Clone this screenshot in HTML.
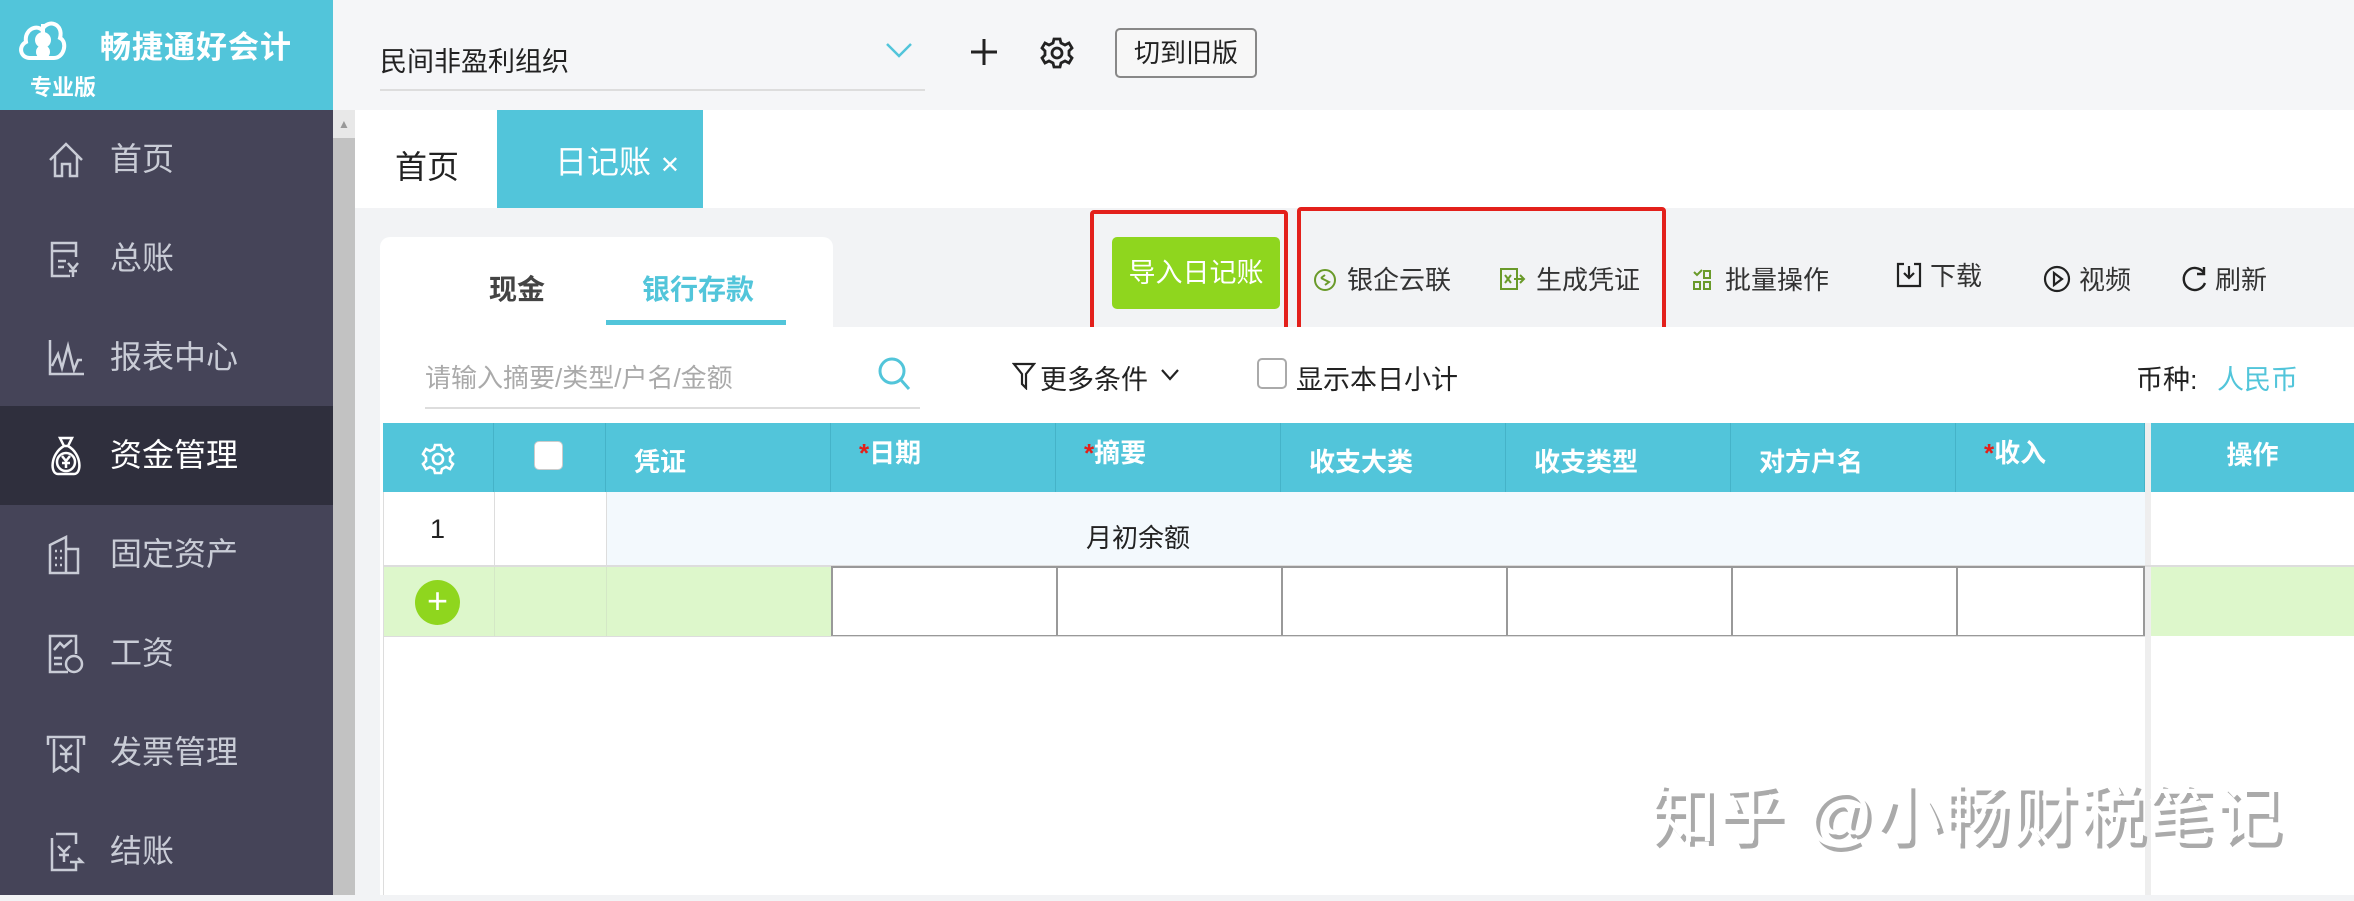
<!DOCTYPE html>
<html><head><meta charset="utf-8"><style>
*{margin:0;padding:0;box-sizing:border-box}
body{width:2354px;height:895px;position:relative;overflow:hidden;background:#f2f3f5;font-family:"Liberation Sans","Noto Sans CJK SC",sans-serif;color:#333}
.a{position:absolute}
.side{left:0;top:110px;width:333px;height:785px;background:#454458}
.item{position:absolute;left:0;width:333px;height:99px;color:#c9ccd6;font-size:32px;line-height:99px;padding-left:110px}
.item svg{position:absolute;left:46px;top:30px}
.tb{font-size:26px;color:#333;top:263px;line-height:34px}
.th{position:absolute;top:423px;height:69px;background:#52c5da;color:#fff;font-size:26px;font-weight:bold;line-height:69px;border-right:1px solid #45b3c8}
.red{border:4px solid #e3201b;border-radius:4px}
</style></head><body>
<div class="a" style="left:0;top:0;width:333px;height:110px;background:#52c5da"></div>
<svg class="a" style="left:16px;top:14px" width="52" height="52" viewBox="0 0 52 52" fill="none" stroke="#fff" stroke-width="4"><path d="M14 44 C4 44 2 32 10 28 C8 16 20 10 26 16 C32 4 48 10 44 24 C52 28 48 44 38 44 Z"/><circle cx="27" cy="26" r="6" fill="#fff"/><circle cx="27" cy="38" r="5" fill="#fff"/><path d="M27 10 V46"/></svg>
<div class="a" style="left:100px;top:22px;color:#fff;font-size:31px;font-weight:bold;letter-spacing:1px">畅捷通好会计</div>
<div class="a" style="left:30px;top:70px;color:#fff;font-size:22px;font-weight:bold">专业版</div>
<div class="a" style="left:333px;top:0;width:2021px;height:110px;background:#f5f6f8"></div>
<div class="a" style="left:380px;top:40px;font-size:27px;color:#222">民间非盈利组织</div>
<div class="a" style="left:380px;top:89px;width:545px;height:2px;background:#ddd"></div>
<svg class="a" style="left:885px;top:42px" width="28" height="18"><path d="M2 2 L14 14 L26 2" stroke="#52c5da" stroke-width="2.5" fill="none"/></svg>
<svg class="a" style="left:970px;top:38px" width="28" height="28"><path d="M14 1V27M1 14H27" stroke="#222" stroke-width="3"/></svg>
<svg class="a" style="left:1040px;top:36px" width="34" height="34" viewBox="0 0 34 34" fill="none" stroke="#222" stroke-width="2.8"><path d="M14 3h6l1 4 4 2 4-2 3 5-3 3v4l3 3-3 5-4-2-4 2-1 4h-6l-1-4-4-2-4 2-3-5 3-3v-4l-3-3 3-5 4 2 4-2z"/><circle cx="17" cy="17" r="5"/></svg>
<div class="a" style="left:1115px;top:28px;width:142px;height:50px;border:2px solid #888;border-radius:5px;background:#f7f7f7;font-size:26px;line-height:46px;text-align:center;color:#222">切到旧版</div>
<div class="a side"></div>
<div class="a" style="left:333px;top:110px;width:22px;height:785px;background:#c2c2c2"></div>
<div class="a" style="left:333px;top:110px;width:22px;height:28px;background:#e8e8e8;color:#999;font-size:12px;text-align:center;line-height:28px">▲</div>
<div class="item" style="top:110px"><svg width="40" height="40" viewBox="0 0 40 40" fill="none" stroke="#c9ccd6" stroke-width="2.5"><path d="M4 20 L20 4 L36 20 M9 15 V36 H16 V24 H24 V36 H31 V15"/></svg>首页</div>
<div class="item" style="top:209px"><svg width="40" height="40" viewBox="0 0 40 40" fill="none" stroke="#c9ccd6" stroke-width="2.5"><path d="M24 37 H6 V4 H30 V18 M6 12 H30 M12 22 H20 M12 28 H18 M22 24 L27 30 L32 24 M27 30 V38 M23 32 H31"/></svg>总账</div>
<div class="item" style="top:308px"><svg width="40" height="40" viewBox="0 0 40 40" fill="none" stroke="#c9ccd6" stroke-width="2.5"><path d="M4 2 V36 H38 M6 28 L12 16 L16 30 L22 8 L28 32 L32 22 L36 22"/></svg>报表中心</div>
<div class="a" style="left:0;top:406px;width:333px;height:99px;background:#2f2f3d"></div>
<div class="item" style="top:406px;color:#fff"><svg width="40" height="40" viewBox="0 0 40 40" fill="none" stroke="#fff" stroke-width="2.5"><path d="M14 2 H26 L22 10 H18 Z M18 10 C4 18 4 38 12 38 H28 C36 38 36 18 22 10"/><circle cx="20" cy="26" r="9"/><path d="M16 20 L20 25 L24 20 M20 25 V32 M16 27 H24"/></svg>资金管理</div>
<div class="item" style="top:505px"><svg width="40" height="40" viewBox="0 0 40 40" fill="none" stroke="#c9ccd6" stroke-width="2.5"><path d="M4 10 L20 2 V38 H4 Z M20 14 H32 V38 H20 M9 16h2m3 0h2M9 23h2m3 0h2M9 30h2m3 0h2"/></svg>固定资产</div>
<div class="item" style="top:604px"><svg width="40" height="40" viewBox="0 0 40 40" fill="none" stroke="#c9ccd6" stroke-width="2.5"><path d="M22 38 H4 V2 H30 V20 M8 16 L14 9 L18 13 L26 6 M8 24 H16 M8 30 H16"/><circle cx="28" cy="30" r="8"/></svg>工资</div>
<div class="item" style="top:703px"><svg width="40" height="40" viewBox="0 0 40 40" fill="none" stroke="#c9ccd6" stroke-width="2.5"><path d="M2 12 V4 H38 V12 M8 6 V38 L14 34 L20 38 L26 34 L32 38 V6 M14 12 L20 18 L26 12 M20 18 V30 M14 21 H26"/></svg>发票管理</div>
<div class="item" style="top:802px"><svg width="40" height="40" viewBox="0 0 40 40" fill="none" stroke="#c9ccd6" stroke-width="2.5"><path d="M10 2 H30 V12 M6 6 V38 H30 V30 M12 14 L18 20 L24 14 M18 20 V30 M13 23 H23 M24 30 H36 L32 26"/></svg>结账</div>
<div class="a" style="left:355px;top:110px;width:1999px;height:98px;background:#fff"></div>
<div class="a" style="left:395px;top:142px;font-size:32px;color:#222">首页</div>
<div class="a" style="left:497px;top:110px;width:206px;height:98px;background:#52c5da;color:#fff;font-size:32px;line-height:104px;padding-left:58px">日记账 <span style="font-size:24px">✕</span></div>
<div class="a" style="left:380px;top:237px;width:453px;height:94px;background:#fff;border-radius:10px 10px 0 0"></div>
<div class="a" style="left:489px;top:268px;font-size:28px;font-weight:bold;color:#444">现金</div>
<div class="a" style="left:642px;top:268px;font-size:28px;font-weight:bold;color:#52c5da">银行存款</div>
<div class="a" style="left:606px;top:320px;width:180px;height:5px;background:#52c5da"></div>
<div class="a" style="left:1112px;top:237px;width:168px;height:72px;background:#8fd61e;border-radius:5px;color:#fff;font-size:27px;line-height:72px;text-align:center">导入日记账</div>
<div class="a red" style="left:1090px;top:210px;width:198px;height:136px"></div>
<div class="a red" style="left:1297px;top:207px;width:369px;height:139px"></div>
<svg class="a" style="left:1313px;top:268px" width="24" height="24"><circle cx="12" cy="12" r="10" stroke="#6a9a2a" stroke-width="2" fill="none"/><path d="M8 10 L12 7 M8 10 L16 14 L12 17" stroke="#6a9a2a" stroke-width="2" fill="none"/></svg>
<div class="a tb" style="left:1347px">银企云联</div>
<svg class="a" style="left:1500px;top:268px" width="26" height="22"><rect x="1" y="1" width="16" height="20" stroke="#6a9a2a" stroke-width="2" fill="none"/><path d="M5 7l6 8M11 7l-6 8M14 11H24M20 7l4 4-4 4" stroke="#6a9a2a" stroke-width="2" fill="none"/></svg>
<div class="a tb" style="left:1536px">生成凭证</div>
<svg class="a" style="left:1692px;top:269px" width="20" height="22"><path d="M2 3l3 3 5-5M2 13h6v7H2zM12 2h6v7h-6zM12 13h6v7h-6z" stroke="#6a9a2a" stroke-width="2" fill="none"/></svg>
<div class="a tb" style="left:1725px">批量操作</div>
<svg class="a" style="left:1896px;top:262px" width="26" height="26"><path d="M8 2H2V24H24V2H18M13 4V16M8 11l5 5 5-5" stroke="#222" stroke-width="2.2" fill="none"/></svg>
<div class="a tb" style="left:1930px;top:259px">下载</div>
<svg class="a" style="left:2043px;top:265px" width="28" height="28"><circle cx="14" cy="14" r="12" stroke="#222" stroke-width="2.2" fill="none"/><path d="M11 8L19 14L11 20Z" stroke="#222" stroke-width="2.2" fill="none"/></svg>
<div class="a tb" style="left:2079px">视频</div>
<svg class="a" style="left:2182px;top:265px" width="26" height="28"><path d="M22 8A11 11 0 1 0 23 18M22 2V9H15" stroke="#222" stroke-width="2.4" fill="none"/></svg>
<div class="a tb" style="left:2215px">刷新</div>
<div class="a" style="left:380px;top:327px;width:1974px;height:568px;background:#fff"></div>
<div class="a" style="left:425px;top:358px;font-size:26px;color:#aaa">请输入摘要/类型/户名/金额</div>
<div class="a" style="left:425px;top:407px;width:495px;height:2px;background:#ddd"></div>
<svg class="a" style="left:877px;top:356px" width="34" height="36"><circle cx="15" cy="15" r="12" stroke="#52c5da" stroke-width="3" fill="none"/><path d="M24 24L32 33" stroke="#52c5da" stroke-width="3"/></svg>
<svg class="a" style="left:1012px;top:362px" width="24" height="28"><path d="M2 2H22L14 12V26L10 22V12Z" stroke="#222" stroke-width="2.2" fill="none"/></svg>
<div class="a" style="left:1040px;top:358px;font-size:27px;color:#222">更多条件</div>
<svg class="a" style="left:1160px;top:368px" width="20" height="14"><path d="M2 2L10 11L18 2" stroke="#222" stroke-width="2.2" fill="none"/></svg>
<div class="a" style="left:1257px;top:358px;width:30px;height:31px;border:2px solid #aaa;border-radius:5px;background:#fff"></div>
<div class="a" style="left:1296px;top:358px;font-size:27px;color:#222">显示本日小计</div>
<div class="a" style="left:2136px;top:358px;font-size:27px;color:#222">币种:</div>
<div class="a" style="left:2217px;top:358px;font-size:27px;color:#52c5da">人民币</div>
<div class="th" style="left:383px;width:111px"><svg style="position:absolute;left:38px;top:19px" width="34" height="34" viewBox="0 0 34 34" fill="none" stroke="#fff" stroke-width="2.6"><path d="M14 3h6l1 4 4 2 4-2 3 5-3 3v4l3 3-3 5-4-2-4 2-1 4h-6l-1-4-4-2-4 2-3-5 3-3v-4l-3-3 3-5 4 2 4-2z"/><circle cx="17" cy="17" r="5"/></svg></div>
<div class="th" style="left:494px;width:112px"><div style="position:absolute;left:40px;top:18px;width:29px;height:29px;background:#fff;border-radius:5px;border:1px solid #ccc"></div></div>
<div class="th" style="left:606px;width:225px;padding-left:28px;line-height:78px">凭证</div>
<div class="th" style="left:831px;width:225px;padding-left:28px;line-height:60px"><span style="color:#e3201b">*</span>日期</div>
<div class="th" style="left:1056px;width:225px;padding-left:28px;line-height:60px"><span style="color:#e3201b">*</span>摘要</div>
<div class="th" style="left:1281px;width:225px;padding-left:28px;line-height:78px">收支大类</div>
<div class="th" style="left:1506px;width:225px;padding-left:28px;line-height:78px">收支类型</div>
<div class="th" style="left:1731px;width:225px;padding-left:28px;line-height:78px">对方户名</div>
<div class="th" style="left:1956px;width:189px;padding-left:28px;line-height:60px"><span style="color:#e3201b">*</span>收入</div>
<div class="a" style="left:2145px;top:423px;width:6px;height:472px;background:#eee"></div>
<div class="th" style="left:2151px;width:203px;text-align:center;line-height:64px;border:none">操作</div>
<div class="a" style="left:383px;top:492px;width:1px;height:403px;background:#ddd"></div>
<div class="a" style="left:606px;top:492px;width:1539px;height:74px;background:#f3f9fd"></div>
<div class="a" style="left:494px;top:492px;width:1px;height:144px;background:#ddd"></div>
<div class="a" style="left:606px;top:492px;width:1px;height:144px;background:#ddd"></div>
<div class="a" style="left:383px;top:565px;width:1971px;height:2px;background:#ddd"></div>
<div class="a" style="left:430px;top:514px;font-size:27px;color:#222">1</div>
<div class="a" style="left:1086px;top:518px;font-size:26px;color:#222">月初余额</div>
<div class="a" style="left:384px;top:567px;width:447px;height:69px;background:#ddf7cb"></div>
<div class="a" style="left:2151px;top:567px;width:203px;height:69px;background:#ddf7cb"></div>
<div class="a" style="left:494px;top:567px;width:1px;height:69px;background:#d4e8c6"></div>
<div class="a" style="left:606px;top:567px;width:1px;height:69px;background:#d4e8c6"></div>
<div class="a" style="left:831px;top:566px;width:1314px;height:71px;border:2px solid #999;background:#fff"></div>
<div class="a" style="left:1056px;top:566px;width:2px;height:71px;background:#999"></div>
<div class="a" style="left:1281px;top:566px;width:2px;height:71px;background:#999"></div>
<div class="a" style="left:1506px;top:566px;width:2px;height:71px;background:#999"></div>
<div class="a" style="left:1731px;top:566px;width:2px;height:71px;background:#999"></div>
<div class="a" style="left:1956px;top:566px;width:2px;height:71px;background:#999"></div>
<div class="a" style="left:383px;top:636px;width:1762px;height:1px;background:#ddd"></div>
<div class="a" style="left:415px;top:580px;width:45px;height:45px;border-radius:50%;background:#8fd61e;color:#fff;font-size:36px;line-height:42px;text-align:center">+</div>
<div class="a" style="left:1650px;top:762px;font-size:66px;color:#fff;text-shadow:4px 5px 0 #aaa;letter-spacing:2px;white-space:nowrap">知乎 @小畅财税笔记</div>
</body></html>
